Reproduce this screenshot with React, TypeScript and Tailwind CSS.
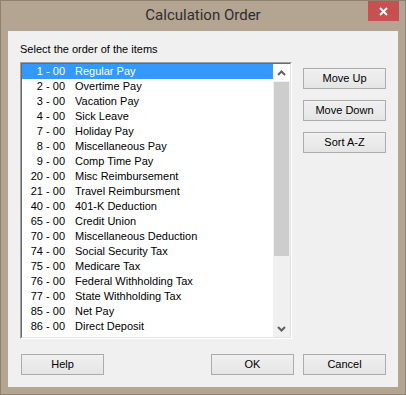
import React, { useState } from "react";

interface Item {
    code: number;
    name: string;
}

const items: Item[] = [
    { code: 1, name: "Regular Pay" },
    { code: 2, name: "Overtime Pay" },
    { code: 3, name: "Vacation Pay" },
    { code: 4, name: "Sick Leave" },
    { code: 7, name: "Holiday Pay" },
    { code: 8, name: "Miscellaneous Pay" },
    { code: 9, name: "Comp Time Pay" },
    { code: 20, name: "Misc Reimbursement" },
    { code: 21, name: "Travel Reimbursment" },
    { code: 40, name: "401-K Deduction" },
    { code: 65, name: "Credit Union" },
    { code: 70, name: "Miscellaneous Deduction" },
    { code: 74, name: "Social Security Tax" },
    { code: 75, name: "Medicare Tax" },
    { code: 76, name: "Federal Withholding Tax" },
    { code: 77, name: "State Withholding Tax" },
    { code: 85, name: "Net Pay" },
    { code: 86, name: "Direct Deposit" },
];

const DialogButton: React.FC<{ label: string }> = ({ label }) => (
    <button className="w-[83px] h-[21px] border border-[#acacac] bg-gradient-to-b from-[#f0f0f0] to-[#e5e5e5] text-[11px] leading-[19px] text-black text-center">
        {label}
    </button>
);

const Chevron: React.FC<{ up?: boolean }> = ({ up }) => (
    <svg width="9" height="6" viewBox="0 0 9 6" className="block">
        <path
            d={up ? "M1 5 L4.5 1.5 L8 5" : "M1 1 L4.5 4.5 L8 1"}
            fill="none"
            stroke="#606060"
            strokeWidth="2"
        />
    </svg>
);

const App: React.FC = () => {
    const [selected, setSelected] = useState(0);

    return (
        <div className="w-[406px] h-[395px] bg-[#b4a492] border border-[#8f8172] flex flex-col" style={{ fontFamily: '"Liberation Sans", Arial, sans-serif' }}>
            {/* title bar */}
            <div className="h-[30px] relative flex items-center justify-center">
                <span className="text-[15px] text-[#2e2e2e] pb-[1px]" style={{ fontFamily: 'Roboto, "Liberation Sans", sans-serif' }}>Calculation Order</span>
                <div className="absolute right-[6px] top-0 w-[31px] h-[20px] bg-[#c75050] flex items-center justify-center">
                    <svg width="9" height="9" viewBox="0 0 9 9">
                        <path d="M1 1 L8 8 M8 1 L1 8" stroke="#ffffff" strokeWidth="2" />
                    </svg>
                </div>
            </div>

            {/* client area */}
            <div className="mx-[7px] mb-[7px] flex-1 bg-[#f0f0f0] text-[11px] text-black flex flex-col">
                <div className="pl-[12px] pt-[12px] leading-[13px]">Select the order of the items</div>

                <div className="flex mt-[6px] pl-[12px]">
                    {/* list box */}
                    <div className="w-[272px] h-[277px] border-t border-l border-[#a0a0a0] border-r-white border-b-white border-r border-b">
                        <div className="w-full h-full border-t border-l border-[#696969] border-r border-b border-r-[#e3e3e3] border-b-[#e3e3e3] bg-white flex">
                            <div className="flex-1 overflow-hidden">
                                {items.map((item, index) => (
                                    <div
                                        key={item.code}
                                        onClick={() => setSelected(index)}
                                        className={`h-[15px] leading-[15px] flex ${index === selected ? "bg-[#3399ff] text-white" : ""}`}
                                    >
                                        <span className="w-[43px] text-right whitespace-pre">{item.code} - 00</span>
                                        <span className="pl-[10px] whitespace-nowrap">{item.name}</span>
                                    </div>
                                ))}
                            </div>
                            {/* scrollbar */}
                            <div className="w-[17px] bg-[#f0f0f0] flex flex-col">
                                <div className="h-[17px] bg-white flex items-center justify-center">
                                    <Chevron up />
                                </div>
                                <div className="mx-[1px] mt-[1px] h-[174px] bg-[#cdcdcd]"></div>
                                <div className="flex-1"></div>
                                <div className="h-[17px] flex items-center justify-center">
                                    <Chevron />
                                </div>
                            </div>
                        </div>
                    </div>

                    <div className="flex flex-col gap-[11px] ml-[11px] mt-[6px]">
                        <DialogButton label="Move Up" />
                        <DialogButton label="Move Down" />
                        <DialogButton label="Sort A-Z" />
                    </div>
                </div>

                <div className="flex mt-[15px] pl-[13px]">
                    <DialogButton label="Help" />
                    <div className="ml-[107px] flex gap-[9px]">
                        <DialogButton label="OK" />
                        <DialogButton label="Cancel" />
                    </div>
                </div>
            </div>
        </div>
    );
};

export default App;
